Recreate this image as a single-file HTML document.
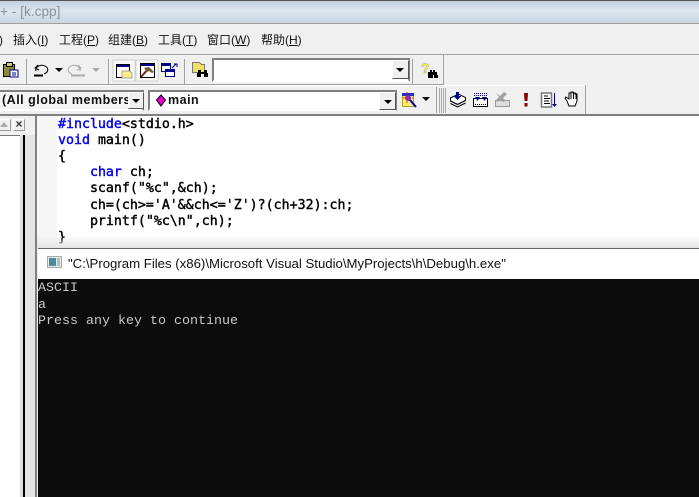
<!DOCTYPE html>
<html><head><meta charset="utf-8"><style>
html,body{margin:0;padding:0;width:699px;height:497px;overflow:hidden;background:#f0f0f0}
div,span,svg{position:absolute;display:block}
svg{overflow:visible}
.t{white-space:pre}
.m{top:32px;font:12px/17px "Liberation Sans","Noto Sans CJK SC",sans-serif;color:#111;white-space:pre}
.c{left:58px;font:13.28px/16px "DejaVu Sans Mono",monospace;color:#000;white-space:pre;-webkit-text-stroke:.4px #000}
.c b{position:static;color:#0000f0;font-weight:normal;-webkit-text-stroke:.4px #0000f0}
.k{left:38px;font:13.33px/16px "Liberation Mono",monospace;color:#c8c8c8;white-space:pre}
.tri{width:0;height:0;border-left:4px solid transparent;border-right:4px solid transparent;border-top:4px solid #000}
.btn{background:#f0f0f0;border:1px solid;border-color:#fff #555 #555 #fff;box-sizing:border-box}
</style></head><body>
<div style="left:0;top:0;width:699px;height:1px;background:#555"></div>
<div style="left:0;top:1px;width:699px;height:22px;background:linear-gradient(#c2d1e2,#dde6ee 45%,#c9d6e3)"></div>
<div class="t" style="left:0;top:3px;font:13.700px/18px 'Liberation Sans',sans-serif;color:#8a929b">+ - [k.cpp]</div>
<div style="left:0;top:23px;width:699px;height:1px;background:#a0a0a0"></div>

<div class="m" style="left:-1px">)</div>
<div class="m" style="left:13px">插入(<u>I</u>)</div>
<div class="m" style="left:59px">工程(<u>P</u>)</div>
<div class="m" style="left:108px">组建(<u>B</u>)</div>
<div class="m" style="left:158px">工具(<u>T</u>)</div>
<div class="m" style="left:207px">窗口(<u>W</u>)</div>
<div class="m" style="left:261px">帮助(<u>H</u>)</div>

<div style="left:0;top:54px;width:699px;height:1px;background:#a0a0a0"></div>
<div style="left:0;top:84px;width:443px;height:1px;background:#a0a0a0"></div>
<div style="left:443px;top:55px;width:1px;height:30px;background:#a0a0a0"></div>
<div style="left:0;top:85px;width:586px;height:1px;background:#fff"></div>
<div style="left:585px;top:85px;width:1px;height:29px;background:#a0a0a0"></div>
<div style="left:0;top:114px;width:699px;height:2px;background:#808080"></div>

<!-- toolbar 1 icons -->
<svg style="left:0;top:55px" width="443" height="30">
<g>
<rect x="3.500" y="9.500" width="11" height="12" fill="#8a8a3c" stroke="#000"/>
<rect x="6.500" y="7.500" width="6" height="4" fill="#d8c860" stroke="#000"/>
<rect x="10" y="15" width="8" height="7" fill="#fff" stroke="#00008b"/>
<path d="M12 18h4M12 20h4" stroke="#00008b"/>
<path d="M26.500 4v25" stroke="#a0a0a0"/>
<path d="M36 16a6 4.500 0 1 1 8 3M38 10l-3 3 4 2" fill="none" stroke="#000" stroke-width="1"/>
<path d="M34 20.500h9" stroke="#000" stroke-width="2"/>
<path d="M55 13h8l-4 4z" fill="#000"/>
<path d="M80 16a6 4.500 0 1 0-8 3M78 10l3 3-4 2" fill="none" stroke="#aaa" stroke-width="1"/>
<path d="M71 20.500h14" stroke="#aaa" stroke-width="2"/>
<path d="M92 13h8l-4 4z" fill="#aaa"/>
<path d="M108.500 4v25" stroke="#a0a0a0"/>
<rect x="113" y="5" width="22" height="21" fill="#f8f8f8" stroke="#bbb" stroke-width=".6"/>
<rect x="116.500" y="9.500" width="13" height="13" fill="#fff" stroke="#000"/>
<path d="M117 10h12v2h-12z" fill="#00008b"/>
<path d="M122 16h8l2 2v5h-10z" fill="#ffef8a" stroke="#888" stroke-width=".7"/>
<rect x="136" y="5" width="22" height="21" fill="#f8f8f8" stroke="#bbb" stroke-width=".6"/>
<rect x="140.500" y="8.500" width="14" height="14" fill="#fff" stroke="#000"/>
<path d="M141 9h13v2h-13z" fill="#00008b"/>
<path d="M141 22l8-9" stroke="#7a1c10" stroke-width="2"/>
<path d="M144 13l5-1 5 5-2 1-3-2-2 1z" fill="#6b5a30"/>
<rect x="161.500" y="8.500" width="9" height="8" fill="#fff" stroke="#00008b"/>
<path d="M162 9h8v2h-8z" fill="#00008b"/>
<rect x="165.500" y="14.500" width="9" height="7" fill="#fff" stroke="#00008b"/>
<path d="M166 15h8v2h-8z" fill="#00008b"/>
<path d="M172 13l4-4M174 9h3v3" fill="none" stroke="#00008b"/>
<path d="M184.500 4v25" stroke="#a0a0a0"/>
<path d="M192.500 7.500h7l2 2h3v8h-12z" fill="#f0e060" stroke="#777"/>
<path d="M198 15h3v2h3v-2h3v3h1v4h-4v-3h-3v3h-4v-4h1z" fill="#000"/>
</g>
<path d="M412.500 4v25" stroke="#a0a0a0"/>
<text x="421" y="18" font-family="Liberation Sans,sans-serif" font-weight="bold" font-size="14" fill="#ffff20" stroke="#999" stroke-width=".4">?</text>
<path d="M428 17h2v-2h2v2h1v-2h2v2h2v3h1v3h-4v-3h-1v3h-5v-3z" fill="#000"/>
</svg>

<!-- find combo -->
<div style="left:212px;top:58px;width:198px;height:24px;background:#fff;border:2px solid;border-color:#808080 #808080 #fff #808080;box-sizing:border-box"></div>
<div class="btn" style="left:392px;top:60px;width:17px;height:19px"></div>
<div class="tri" style="left:396px;top:68px"></div>

<!-- toolbar 2 combos -->
<div style="left:-4px;top:90px;width:148px;height:21px;background:#f4f4f4;border:2px solid;border-color:#808080 #808080 #fff #808080;box-sizing:border-box"></div>
<div class="t" style="left:2px;top:92px;width:126px;height:17px;overflow:hidden;font:bold 12.500px/17px 'Liberation Sans',sans-serif;color:#111;letter-spacing:.5px">(All global members</div>
<div class="btn" style="left:128px;top:92px;width:16px;height:17px"></div>
<div class="tri" style="left:132px;top:99px"></div>
<div style="left:148px;top:90px;width:249px;height:21px;background:#fff;border:2px solid;border-color:#808080 #808080 #fff #808080;box-sizing:border-box"></div>
<svg style="left:155px;top:94px" width="12" height="14"><path d="M6 1l4.500 5-4.500 6-4.500-6z" fill="#e000d0" stroke="#000"/></svg>
<div class="t" style="left:168px;top:92px;font:bold 12.500px/17px 'Liberation Sans',sans-serif;color:#111;letter-spacing:.5px">main</div>
<div class="btn" style="left:379px;top:92px;width:17px;height:18px"></div>
<div class="tri" style="left:384px;top:100px"></div>

<svg style="left:395px;top:85px" width="200" height="29">
<rect x="7.500" y="8.500" width="11" height="13" fill="#ffee70" stroke="#b0a020"/>
<path d="M7 8h12v3h-12z" fill="#2030c0"/>
<path d="M12 7v11M8 13h11" stroke="#e01010" stroke-width=".8" stroke-dasharray="2 1"/>
<circle cx="13" cy="13" r="3" fill="#9030a0"/>
<path d="M15 15l6 7" stroke="#0000c0" stroke-width="2"/>
<path d="M27 12h8l-4 4z" fill="#000"/>
<path d="M41.500 2v26" stroke="#a0a0a0"/>
<path d="M44.500 3v25M46.500 3v25M48.500 3v25M50.500 3v25" stroke="#aaa" fill="none"/>
<!-- stack -->
<path d="M55.500 13l8-4 7 3.500v3l-8 4-7-3.500z" fill="#fff" stroke="#000"/>
<path d="M55.500 16l7 3.500 8-4M55.500 18.500l7 3.500 8-4" fill="none" stroke="#000"/>
<path d="M61 7h3v4h2.500l-4 4-4-4h2.500z" fill="#00008b"/>
<!-- keyboard -->
<rect x="78.500" y="13.500" width="14" height="8" fill="#fff" stroke="#000"/>
<path d="M79 8.500h14M79 10.500h14" stroke="#00008b" stroke-dasharray="1 1"/>
<path d="M80 12h5l-2.500 4zM87 12h5l-2.500 4z" fill="#00008b"/>
<path d="M80 19.500h12" stroke="#000" stroke-dasharray="1 1"/>
<!-- disabled keyboard -->
<rect x="100.500" y="15.500" width="14" height="6" fill="#ddd" stroke="#999"/>
<path d="M101 8l4 3 4-4 3 2-4 4 3 3-3 1-3-2-3 2-1-2 3-3z" fill="#a0a0a0"/>
<!-- exclamation -->
<path d="M129 8h4l-.6 8h-2.800zM129.500 18h3v3.500h-3z" fill="#800000"/>
<!-- list -->
<rect x="146.500" y="8" width="10" height="14" fill="#fff" stroke="#777" stroke-width="1.500"/>
<path d="M149 11h4M149 13.500h6M149 16h5M149 18.500h6" stroke="#000"/>
<path d="M159.500 8v12" stroke="#00008b"/><path d="M157 19h5l-2.500 3z" fill="#00008b"/>
<!-- hand -->
<path d="M172 16l-2-3 1-1 3 2v-6h2v-1h2v1h2v1h2v7l-2 5h-6z" fill="#fff" stroke="#000"/>
<path d="M176 8v6M178.500 7v7M181 8v6" stroke="#000"/>
</svg>

<!-- left dock -->
<div style="left:0;top:116px;width:36px;height:381px;background:#f0f0f0"></div>
<div class="btn" style="left:-2px;top:119px;width:13px;height:12px;border-color:#fff #999 #999 #fff"></div>
<div style="left:0;top:122px;width:0;height:0;border-left:4px solid transparent;border-right:4px solid transparent;border-bottom:5px solid #aaa"></div>
<div class="btn" style="left:13px;top:119px;width:12px;height:12px;border-color:#fff #999 #999 #fff"></div>
<div class="t" style="left:14px;top:118px;width:10px;text-align:center;font:bold 12px/13px 'Liberation Sans',sans-serif;color:#333">×</div>
<div style="left:0;top:135px;width:21px;height:362px;background:#fff;border-top:1px solid #777;box-sizing:border-box"></div>
<div style="left:20px;top:135px;width:3px;height:362px;background:#ddd"></div>
<div style="left:23px;top:135px;width:2px;height:362px;background:#000"></div>
<div style="left:25px;top:135px;width:10px;height:362px;background:#e4e4e4"></div>
<div style="left:35px;top:116px;width:2px;height:381px;background:#808080"></div>

<!-- editor -->
<div style="left:37px;top:116px;width:662px;height:132px;background:#fff"></div>
<div style="left:37px;top:116px;width:20px;height:132px;background:#f6f6f6"></div>
<div class="c" style="top:117px"><b>#include</b>&lt;stdio.h&gt;</div>
<div class="c" style="top:133px"><b>void</b> main()</div>
<div class="c" style="top:149px">{</div>
<div class="c" style="top:165px">    <b>char</b> ch;</div>
<div class="c" style="top:181px">    scanf("%c",&amp;ch);</div>
<div class="c" style="top:198px">    ch=(ch&gt;='A'&amp;&amp;ch&lt;='Z')?(ch+32):ch;</div>
<div class="c" style="top:214px">    printf("%c\n",ch);</div>
<div class="c" style="top:230px">}</div>
<div style="left:37px;top:236px;width:662px;height:12px;background:linear-gradient(rgba(228,228,228,0),#e4e4e4)"></div>

<!-- console -->
<div style="left:38px;top:248px;width:661px;height:1px;background:#666"></div>
<div style="left:38px;top:249px;width:661px;height:30px;background:#fff"></div>
<svg style="left:47px;top:256px" width="16" height="14"><rect x=".5" y=".5" width="14" height="11" fill="#e8e8e8" stroke="#aaa"/><rect x="2" y="2" width="7" height="8" fill="#4d8c9a"/><rect x="10" y="2" width="3" height="8" fill="#a5c4cc"/></svg>
<div class="t" style="left:68px;top:255px;font:13.200px/18px 'Liberation Sans',sans-serif;color:#111">"C:\Program Files (x86)\Microsoft Visual Studio\MyProjects\h\Debug\h.exe"</div>
<div style="left:38px;top:279px;width:661px;height:218px;background:#0c0c0c"></div>
<div class="k" style="top:281px">ASCII</div>
<div class="k" style="top:298px">a</div>
<div class="k" style="top:314px">Press any key to continue</div>
</body></html>
